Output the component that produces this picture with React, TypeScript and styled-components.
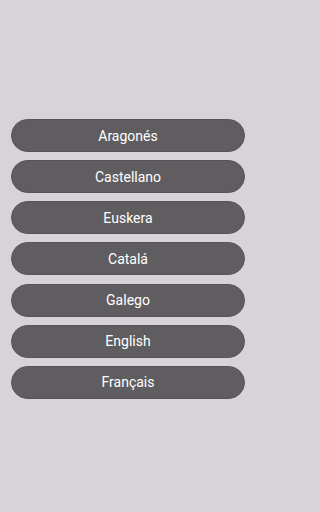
import styled, { createGlobalStyle } from "styled-components";

// ==================== 언어 선택 화면 =================

const GlobalStyle = createGlobalStyle`
  html, body {
    margin: 0;
    padding: 0;
    background: #d6d4d7;
  }
  * {
    box-sizing: border-box;
  }
`;

const languages = [
  "Aragonés",
  "Castellano",
  "Euskera",
  "Catalá",
  "Galego",
  "English",
  "Français",
];

const App = () => {
  return (
    <>
      <GlobalStyle />
      <Screen>
        <LanguageList>
          {languages.map((lang) => (
            <LanguageButton key={lang}>{lang}</LanguageButton>
          ))}
        </LanguageList>
      </Screen>
    </>
  );
};

export default App;

const Screen = styled.div`
  width: 255px;
  height: 512px;
  background: #d6d4d7;
  padding: 119px 10px 0 11px;
`;

const LanguageList = styled.ul`
  list-style: none;
  margin: 0;
  padding: 0;
  display: flex;
  flex-direction: column;
  gap: 8.17px;
`;

const LanguageButton = styled.li`
  height: 33px;
  border-radius: 17px;
  background: #5f5d60;
  border: 1px solid #555356;
  color: #ffffff;
  font-family: Roboto, "Liberation Sans", sans-serif;
  font-size: 14px;
  display: flex;
  align-items: center;
  justify-content: center;
`;
